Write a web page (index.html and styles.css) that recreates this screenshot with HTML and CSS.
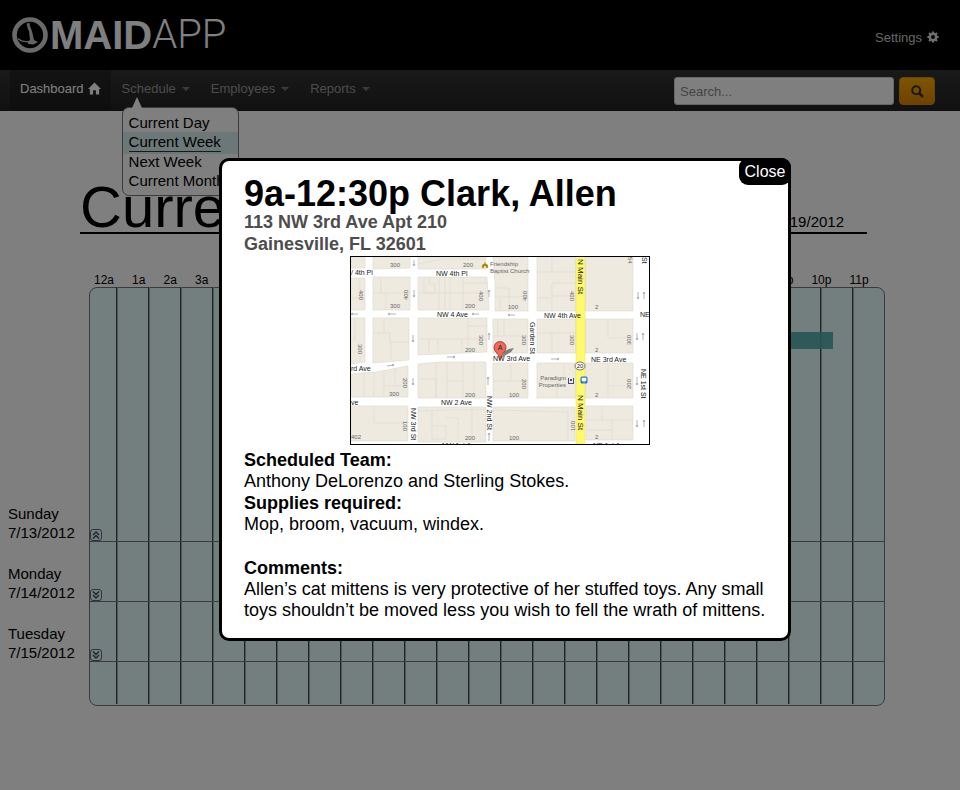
FILE: index.html
```html
<!DOCTYPE html>
<html lang="en">
<head>
<meta charset="utf-8">
<title>MaidApp</title>
<link rel="stylesheet" href="styles.css">
</head>
<body>
<header class="top">
  <a class="logo" href="#">
    <svg class="logo-mark" viewBox="0 0 36 36" aria-hidden="true">
      <circle cx="18" cy="18" r="15.500" fill="none" stroke="#d4d4d4" stroke-width="4.600"/>
      <path d="M14.500 6.500l3-.5c0 3 2 6 2.700 9l1.800 8 4 2-4.500 2.500-5.500-.5-.5-2.500 2.500-1.500-1-8.500c-1.500-2.500-1.500-5-2.500-8z" fill="#c8c8c8"/>
      <path d="M6 21.500c3 3 6 3.500 10 3" fill="none" stroke="#c8c8c8" stroke-width="1.200"/>
    </svg>
    <span class="logo-bold">MAID</span><span class="logo-light">APP</span>
  </a>
  <a class="settings" href="#">Settings
    <svg class="gear" viewBox="0 0 12 12" aria-hidden="true">
      <circle cx="6" cy="6" r="3.200" fill="none" stroke="#ddd" stroke-width="2.600"/>
      <path d="M6 .4v2M6 9.600v2M.4 6h2M9.600 6h2M2 2l1.400 1.400M8.600 8.600L10 10M10 2L8.600 3.400M3.400 8.600L2 10" stroke="#ddd" stroke-width="2"/>
    </svg>
  </a>
</header>

<nav class="nav">
  <ul class="nav-list">
    <li><a class="nav-link active" href="#">Dashboard
      <svg class="home" viewBox="0 0 14 13" aria-hidden="true"><path d="M7 0l7 7h-2v6H8.500V8.500h-3V13H2V7H0z" fill="#fff"/></svg></a></li>
    <li class="has-menu"><a class="nav-link" href="#">Schedule<span class="caret"></span></a>
      <ul class="menu">
        <li><a href="#">Current Day</a></li>
        <li class="current"><a href="#">Current Week</a></li>
        <li><a href="#">Next Week</a></li>
        <li><a href="#">Current Month</a></li>
      </ul>
    </li>
    <li><a class="nav-link" href="#">Employees<span class="caret"></span></a></li>
    <li><a class="nav-link" href="#">Reports<span class="caret"></span></a></li>
  </ul>
  <form class="search">
    <input type="search" aria-label="Search" placeholder="Search...">
    <button type="button" aria-label="Search">
      <svg viewBox="0 0 13 13" aria-hidden="true"><circle cx="5.200" cy="5.200" r="4" fill="none" stroke="#333" stroke-width="2"/><path d="M8.200 8.200l3.800 3.800" stroke="#333" stroke-width="2.600"/></svg>
    </button>
  </form>
</nav>

<main>
  <div class="title">
    <h1>Current Week</h1>
    <span class="range">7/13/2012 - 7/19/2012</span>
  </div>
  <div class="hours">
    <span>12a</span><span>1a</span><span>2a</span><span>3a</span><span>4a</span><span>5a</span><span>6a</span><span>7a</span><span>8a</span><span>9a</span><span>10a</span><span>11a</span><span>12p</span><span>1p</span><span>2p</span><span>3p</span><span>4p</span><span>5p</span><span>6p</span><span>7p</span><span>8p</span><span>9p</span><span>10p</span><span>11p</span>
  </div>
  <div class="calendar">
    <div class="days">
      <div class="day open"><span>Sunday</span><span>7/13/2012</span></div>
      <div class="day"><span>Monday</span><span>7/14/2012</span></div>
      <div class="day"><span>Tuesday</span><span>7/15/2012</span></div>
    </div>
    <div class="board">
      <div class="lines"><i></i><i></i><i></i><i></i><i></i><i></i><i></i><i></i><i></i><i></i><i></i><i></i><i></i><i></i><i></i><i></i><i></i><i></i><i></i><i></i><i></i><i></i><i></i><i></i></div>
      <div class="row open">
        <div class="event"></div>
        <button class="toggle" type="button" aria-label="Collapse Sunday"><svg viewBox="0 0 8 8"><path d="M1 4l3-3 3 3M1 7.500l3-3 3 3"/></svg></button>
      </div>
      <div class="row"><button class="toggle" type="button" aria-label="Expand Monday"><svg viewBox="0 0 8 8"><path d="M1 .5l3 3 3-3M1 4l3 3 3-3"/></svg></button></div>
      <div class="row"><button class="toggle" type="button" aria-label="Expand Tuesday"><svg viewBox="0 0 8 8"><path d="M1 .5l3 3 3-3M1 4l3 3 3-3"/></svg></button></div>
      <div class="row rest"></div>
    </div>
  </div>
</main>

<div class="overlay">
  <section class="modal" role="dialog" aria-labelledby="job-title">
    <button class="close" type="button">Close</button>
    <h2 id="job-title">9a-12:30p Clark, Allen</h2>
    <address>113 NW 3rd Ave Apt 210<br>Gainesville, FL 32601</address>
    <svg class="map" viewBox="0 0 300 189" role="img" aria-label="Map of the job address">
      <rect width="300" height="189" fill="#fff"/>
      <g class="block">
        <path d="M1 1h14v11H1zM23 1h37v11l-37 1zM68 1h68v12H68zM143 1h35v54h-33V26zM187 1h39v54h-39zM235 1h48v54h-48z"/>
        <path d="M1 22h14v32H1zM23 21h37v33H23zM68 21h69l2 33H68z"/>
        <path d="M1 62h14v44l-14 2zM23 62h36v42l-36 3zM68 62h69v34l-69 3zM143 63h35v34h-35zM187 63h39v34h-39zM235 63h48v34h-48z"/>
        <path d="M1 118l25-2 32-6v31H1zM68 108l22-2h46v36H68zM143 107h35v35h-35zM187 107h39v35h-39zM235 107h48v35h-48z"/>
        <path d="M1 150h57v35H1zM68 151h68v35H68zM143 151h82v34h-82zM236 150h47v34h-47z"/>
      </g>
      <path class="parcel" d="M68 8l25-5h43M23 37h37M31 22v15M36 37v17M68 37h69M74 21v16h11v-9h-6v-7M89 21v33M95 21v33M100 21v33M113 21v33M137 27h-24M1 42h14M10 22v20M187 16h39M202 16v-15M202 27h24M202 27v13h24M145 32h14v23M145 41h33M150 41v14M187 42h15v13M23 77h17v9h19M34 62v15M41 86v18M68 83h69M118 62v35M118 70h19M79 83v14M88 83v14M112 83v13M5 62v22H1M143 80h35M148 63v17M154 63v17M187 77h39M202 77v20M258 63v19h25M10 90v16M14 116v25M24 116v25M34 114v27M35 130h23M45 112v18M68 123h18v19M86 106v36M97 106v36M97 125h16M113 106v36M124 106v36M143 125h35M161 107v18M187 125h20v17M214 107v18M258 107v35M258 130h25M24 150v17h34M68 155l68-2M82 155v28h14v-13h-14M96 162h12v21M122 153v32M143 154l75 2v29M236 164h47M252 150v14M262 164v20M236 174h26"/>
      <path d="M226 1h9v187h-9z" fill="#fff96e"/>
      <path d="M226 1v187M235 1v187" stroke="#e6dc62" stroke-width=".5"/>
      <g class="arrow">
        <path d="M64 10V4m-1 4l1 2 1-2M64 41v-7m-1 5l1 2 1-2M63 86v-7m-1 5l1 2 1-2M63 129v-7m-1 5l1 2 1-2"/>
        <path d="M139 34v7m-1-5l1-2 1 2M139 77v7m-1-5l1-2 1 2M138 121v8m-1-6l1-2 1 2M139 177v8m-1-6l1-2 1 2"/>
        <path d="M8 58H1m2-1L1 58l2 1M46 58h-8m2-1l-2 1 2 1M129 58h-7m2-1l-2 1 2 1M165 59h-7m2-1l-2 1 2 1M37 110l7-1m-2-1l2 1-2 1M97 101h8m-2-1l2 1-2 1M201 103h8m-2-1l2 1-2 1"/>
        <path d="M288 43v-7m-1 5l1 2 1-2M294 36v7m-1-5l1-2 1 2M287 84v-7m-1 5l1 2 1-2M293 77v7m-1-5l1-2 1 2M287 129v-8m-1 6l1 2 1-2M287 171v-7m-1 5l1 2 1-2M294 164v7m-1-5l1-2 1 2"/>
      </g>
      <g class="num">
        <text x="40" y="11">300</text><text x="113" y="11">200</text><text x="40" y="52">300</text><text x="115" y="52">200</text>
        <text x="158" y="53">100</text><text x="245" y="53">2</text><text x="115" y="96">200</text><text x="245" y="96">2</text>
        <text x="39" y="140">300</text><text x="115" y="141">200</text><text x="159" y="141">100</text><text x="245" y="141">2</text>
        <text x="1" y="183">402</text><text x="115" y="184">200</text><text x="159" y="184">100</text><text x="245" y="183">2</text>
        <text transform="translate(9 34) rotate(90)">400</text><text transform="translate(58 44) rotate(-90)">400</text>
        <text transform="translate(129 35) rotate(90)">400</text><text transform="translate(177 45) rotate(-90)">400</text>
        <text transform="translate(220 35) rotate(90)">400</text><text transform="translate(278 1) rotate(90)">54</text>
        <text transform="translate(8 88) rotate(90)">300</text><text transform="translate(129 79) rotate(90)">300</text>
        <text transform="translate(172 79) rotate(90)">300</text><text transform="translate(220 79) rotate(90)">300</text>
        <text transform="translate(281 89) rotate(-90)">300</text><text transform="translate(53 122) rotate(90)">200</text>
        <text transform="translate(172 123) rotate(90)">200</text><text transform="translate(281 133) rotate(-90)">200</text>
        <text transform="translate(53 165) rotate(90)">100</text><text transform="translate(225 175) rotate(-90)">100</text>
      </g>
      <g class="street">
        <text x="1" y="19">/ 4th Pl</text><text x="86" y="20">NW 4th Pl</text><text x="87" y="61">NW 4 Ave</text><text x="194" y="62">NW 4th Ave</text><text x="290" y="61">NE</text>
        <text x="1" y="115">rd Ave</text><text x="143" y="105">NW 3rd Ave</text><text x="241" y="106">NE 3rd Ave</text>
        <text x="1" y="149">ve</text><text x="91" y="149">NW 2 Ave</text>
        <text x="92" y="192">NW 1st Ave</text><text x="243" y="192">NE 1st Ave</text>
        <text transform="translate(180 66) rotate(90)">Garden St</text><text transform="translate(292 1) rotate(90)">St</text>
        <text transform="translate(61 152) rotate(90)">NW 3rd St</text><text transform="translate(137 140) rotate(90)">NW 2nd St</text>
        <text transform="translate(291 113) rotate(90)">NE 1st St</text>
        <text class="main" transform="translate(228 3) rotate(90)">N Main St</text><text class="main" transform="translate(228 139) rotate(90)">N Main St</text>
      </g>
      <g class="place">
        <text x="140" y="10">Friendship</text><text x="140" y="17">Baptist Church</text>
        <text x="216" y="124" text-anchor="end">Paradigm</text><text x="216" y="131" text-anchor="end">Properties</text>
      </g>
      <path d="M132 12V9l2-1 1-2 1 2 2 1v3h-2v-2h-2v2z" fill="#9a7d00" stroke="#e9d36a" stroke-width=".4"/>
      <path d="M218 122h1v5h4v-5h1v6h-6zM220 123h2v2h-2z" fill="#4a4a78"/>
      <ellipse cx="230" cy="110" rx="5" ry="4" fill="#fff" stroke="#555" stroke-width=".8"/>
      <text class="route" x="230" y="112" text-anchor="middle">20</text>
      <rect x="230.500" y="120.500" width="7" height="7" rx="1.500" fill="#1f77d8"/><path d="M232 122h4v3h-4zM233 126h2" fill="#fff" stroke="#fff" stroke-width=".5"/>
      <path d="M150 103l5-8 4-2 5-1-3 4-5 3z" fill="#444" opacity=".65"/>
      <path d="M150 104c-.5-4-2-5-4-8a6 6 0 1 1 8 0c-2 3-3.500 4-4 8z" fill="#f2695c" stroke="#7d1d16" stroke-width=".7"/>
      <text class="pin" x="150" y="94" text-anchor="middle">A</text>
      <rect x=".5" y=".5" width="299" height="188" fill="none" stroke="#000"/>
    </svg>
    <h3>Scheduled Team:</h3>
    <p>Anthony DeLorenzo and Sterling Stokes.</p>
    <h3>Supplies required:</h3>
    <p>Mop, broom, vacuum, windex.</p>
    <h3 class="spaced">Comments:</h3>
    <p>Allen’s cat mittens is very protective of her stuffed toys. Any small toys shouldn’t be moved less you wish to fell the wrath of mittens.</p>
  </section>
</div>
</body>
</html>
```
FILE: styles.css
```css
* { box-sizing: border-box; }
body {
  margin: 0;
  min-height: 100vh;
  background: #fff;
  color: #000;
  font: 15px/19px "Liberation Sans", Arial, sans-serif;
}
a { color: inherit; text-decoration: none; }
ul { list-style: none; margin: 0; padding: 0; }
h1, h2, h3, p { margin: 0; }
button { font: inherit; padding: 0; cursor: pointer; }

.top {
  display: flex;
  justify-content: space-between;
  align-items: center;
  height: 70px;
  padding: 0 21px 0 12px;
  background: #000;
}
.logo { display: flex; align-items: center; color: #fff; font-size: 40px; line-height: 46px; }
.logo-mark { width: 36px; height: 36px; margin-right: 2px; }
.logo-bold { font-weight: 700; }
.logo-light { font-family: Roboto, "Liberation Sans", sans-serif; font-weight: 300; }
.settings { display: flex; align-items: center; gap: 5px; padding-top: 4px; color: #ccc; font-size: 13px; }
.gear { width: 12px; height: 12px; }

.nav {
  display: flex;
  justify-content: space-between;
  height: 41px;
  padding: 0 25px 0 10px;
  background: linear-gradient(#333, #222);
  font-size: 13px;
}
.nav-list { display: flex; gap: 1px; }
.nav-link { display: flex; align-items: center; height: 37px; padding: 0 10px; color: #999; }
.nav-link.active { height: 41px; padding-bottom: 4px; background: linear-gradient(#262626, #1c1c1c); color: #fff; }
.home { width: 13px; height: 13px; margin-left: 4px; }
.caret {
  margin-left: 6px;
  border: 4px solid transparent;
  border-top-color: #777;
  border-bottom: 0;
}
.has-menu { position: relative; }
.menu {
  position: absolute;
  z-index: 2;
  top: 37px;
  left: 10px;
  width: 117px;
  padding: 5px 0;
  border: 1px solid #777;
  border-radius: 7px;
  background: #fff;
  font-size: 15px;
}
.menu::before {
  content: "";
  position: absolute;
  top: -11px;
  left: 9px;
  border: 5px solid transparent;
  border-bottom: 11px solid #fff;
  border-top: 0;
}
.menu li { height: 19px; padding-left: 6px; white-space: nowrap; }
.menu .current { height: 22px; margin-bottom: -2px; background: #d8f0ef; }
.menu .current a { display: inline-block; border-bottom: 1px solid #333; }

.search { display: flex; gap: 5px; padding-top: 7px; }
.search input {
  width: 220px;
  height: 28px;
  padding: 0 5px;
  border: 1px solid #ccc;
  border-radius: 3px;
  background: #fff;
  font: inherit;
}
.search input::placeholder { color: #888; }
.search button {
  width: 36px;
  height: 28px;
  border: 1px solid #d08a10;
  border-radius: 4px;
  background: linear-gradient(#fbaa00, #e08300);
}
.search svg { display: block; width: 13px; height: 13px; margin: 0 auto; }

.title {
  display: flex;
  justify-content: space-between;
  align-items: baseline;
  margin: 71px 93px 0 80px;
  padding-right: 23px;
  border-bottom: 2px solid #000;
}
h1 { font-size: 58px; line-height: 50px; font-weight: 400; }
.hours {
  display: flex;
  justify-content: space-between;
  margin: 39px 91px 0 94px;
  font-size: 12px;
  line-height: 14px;
}
.calendar { display: grid; grid-template-columns: 81px 1fr; margin: 0 75px 40px 8px; }
.day {
  display: flex;
  flex-direction: column;
  justify-content: flex-end;
  height: 60px;
}
.day.open { height: 255px; }
.board {
  position: relative;
  border: 1px solid #777;
  border-radius: 8px;
  background: #e6ffff;
}
.lines {
  position: absolute;
  inset: -1px 0 1px 26px;
  display: grid;
  grid-template-columns: repeat(24, 1fr);
}
.lines i { border-left: 1px solid #444; box-shadow: inset 1px 0 #a4b2b2; }
.row { position: relative; display: flex; align-items: flex-end; height: 60px; border-bottom: 1px solid #777; }
.row.open { height: 254px; }
.row.rest { height: 43px; border: 0; }
.toggle {
  display: grid;
  place-items: center;
  width: 12px;
  height: 12px;
  border: 1px solid #667;
  border-radius: 3px;
  background: #e6ffff;
}
.toggle svg { width: 8px; height: 8px; fill: none; stroke: #446; stroke-width: 1.4px; }
.event {
  position: absolute;
  top: 44px;
  right: 51px;
  width: 20%;
  height: 17px;
  background: rgba(80, 170, 168, .9);
}

.overlay {
  position: fixed;
  z-index: 10;
  inset: 0;
  padding: 158px 16px 0 219px;
  background: rgba(0, 0, 0, .5);
}
.modal {
  position: relative;
  max-width: 572px;
  padding: 16px 10px 17px 22px;
  border: 3px solid #000;
  border-radius: 10px;
  background: #fff;
  font-size: 18px;
  line-height: 21px;
}
.close {
  position: absolute;
  top: -3px;
  right: -3px;
  width: 52px;
  height: 27px;
  border: 0;
  border-radius: 9px;
  background: #000;
  color: #fff;
  font-size: 16px;
}
h2 { font-size: 36px; line-height: 34px; font-weight: 700; }
address { font-style: normal; font-weight: 700; line-height: 22px; color: #4d4d4d; }
.map { display: block; width: 300px; height: 189px; margin: 1px auto 4px 106px; }
h3 { font-size: 18px; line-height: 22px; font-weight: 700; }
.spaced { margin-top: 22px; }

.block { fill: #eeeae0; stroke: #dcd8cd; stroke-width: .6px; }
.parcel { fill: none; stroke: #dcd9d0; stroke-width: .6px; }
.arrow { fill: none; stroke: #9aa3b0; stroke-width: .8px; }
.num { fill: #666; font-size: 6px; }
.street { fill: #222; font-size: 7px; }
.street .main { font-size: 8px; }
.place { fill: #666; font-size: 6px; }
.route, .pin { fill: #222; font-size: 6px; }
.pin { font-size: 7px; }
```
